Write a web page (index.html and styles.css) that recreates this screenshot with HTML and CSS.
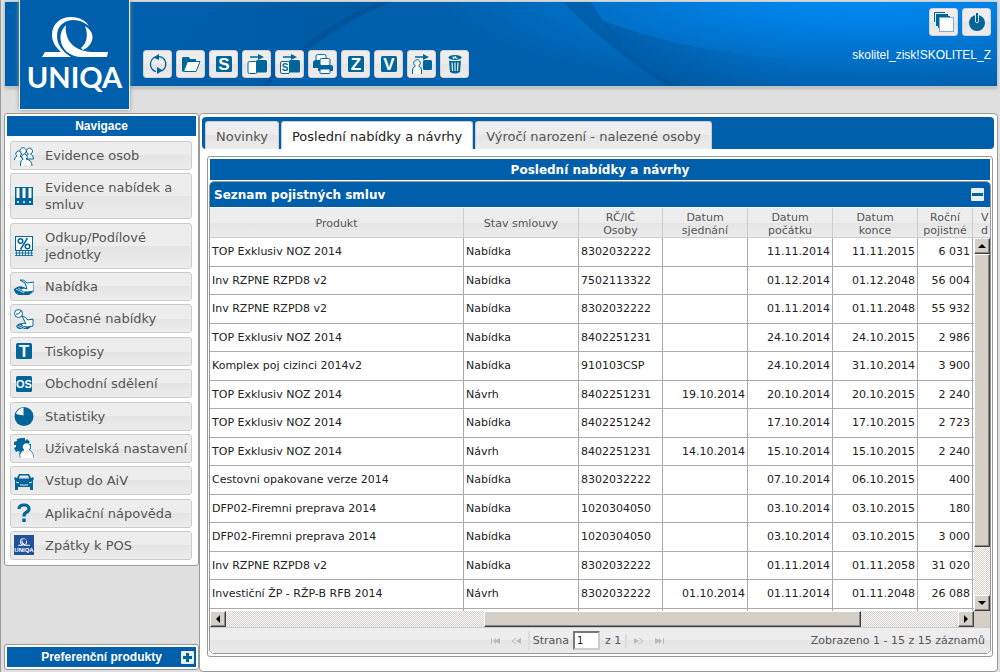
FILE: index.html
```html
<!DOCTYPE html>
<html lang="cs">
<head>
<meta charset="utf-8">
<title>UNIQA</title>
<link rel="stylesheet" href="styles.css">
</head>
<body>
<svg class="defs" aria-hidden="true">
  <defs>
    <symbol id="logo-ring" viewBox="0 0 66 42">
      <path d="M3 36h16C13 31 10 25 10 19 10 8 18 1 29 1c9 0 15 4 18 9-5-4-10-6-15-6C22 4 15 10 15 20c0 9 6 16 14 21H0z"/>
      <path d="M24 9C16 16 17 29 25 36c4 3 9 5 15 5h25l1-5H50C40 36 30 31 26 23c-2-5-3-10-2-14z"/>
      <path d="M43 10c5 3 7.500 7 7.500 11 0 6-4.500 11-9.500 13l-2-2c5-4 8-12 4-22z"/>
    </symbol>
    <symbol id="i-refresh" viewBox="0 0 20 20"><path d="M6 3.500A8 8 0 0 0 4 15M16 5a8 8 0 0 1-2 12M8 17.600A8 8 0 0 1 4 15M10 2.500A8 8 0 0 1 16 5" fill="none" stroke="currentColor" stroke-width="1.300"/><path d="M5 3.500 11 0v6zM15 16.500 9 13v7z"/></symbol>
    <symbol id="i-folder" viewBox="0 0 20 20"><path d="M1 17V4l1-1h6l1 2h6v3H7L2 18z"/><path d="M6.500 7.500H19L15 17.500H2.500z" fill="#fff" stroke="currentColor" stroke-width="1"/></symbol>
    <symbol id="i-s" viewBox="0 0 20 20"><rect x="2" y="2" width="16" height="16" rx="1.500"/><text x="10" y="16" class="glyph">S</text></symbol>
    <symbol id="i-z" viewBox="0 0 20 20"><rect x="2" y="2" width="16" height="16" rx="1.500"/><text x="10" y="16" class="glyph">Z</text></symbol>
    <symbol id="i-v" viewBox="0 0 20 20"><rect x="2" y="2" width="16" height="16" rx="1.500"/><text x="10" y="16" class="glyph">V</text></symbol>
    <symbol id="i-t" viewBox="0 0 20 20"><rect x="2" y="2" width="16" height="16" rx="1.500"/><text x="10" y="16" class="glyph">T</text></symbol>
    <symbol id="i-os" viewBox="0 0 20 20"><rect x="2" y="2" width="16" height="16" rx="1.500"/><text x="10" y="14" class="glyph glyph-os">OS</text></symbol>
    <symbol id="i-move" viewBox="0 0 20 20"><path d="M3 2.300h8V0l6 3-6 3V3.700H3z"/><rect x="1" y="7.500" width="9" height="12" rx="1.500" fill="#fff" stroke="currentColor"/><rect x="9" y="6" width="11" height="12.500" rx="1.500"/></symbol>
    <symbol id="i-move-s" viewBox="0 0 20 20"><path d="M3 2.300h8V0l6 3-6 3V3.700H3z"/><rect x=".5" y="7.500" width="9" height="12" rx="1.500" fill="#fff" stroke="currentColor"/><rect x="9" y="6" width="11" height="12.500" rx="1.500"/><text x="5" y="17" class="glyph glyph-sub">S</text></symbol>
    <symbol id="i-print" viewBox="0 0 20 20"><rect x="3" y=".6" width="10" height="6" rx="1.500" fill="#fff" stroke="currentColor"/><path d="M0 9q0-3 3-3h9v8H0z"/><rect x="7" y="4.500" width="10" height="7" rx="1.500" fill="#fff" stroke="currentColor"/><path d="M5 13q0-2 2-2h11q2 0 2 2v4H5z"/><rect x="7" y="15" width="10" height="4.500" rx="1" fill="#fff" stroke="currentColor"/></symbol>
    <symbol id="i-person-move" viewBox="0 0 20 20"><path d="M3 2.300h8V0l6 3-6 3V3.700H3z"/><rect x="11" y="6" width="9" height="10" rx="1.500"/><path d="M.5 20v-4q0-3 3-4a3.300 3.300 0 1 1 3 0q3 1 3 4v4" fill="#fff" stroke="currentColor"/></symbol>
    <symbol id="i-trash" viewBox="0 0 20 20"><path d="M4 6h12l-1 12q-5 3-10 0z"/><ellipse cx="10" cy="3.500" rx="6.500" ry="2.500"/><path d="M4.500 6.500h11M7 8.500 7.500 17M10 8.500V17M13 8.500 12.500 17M7.500 3l5 1.500M8 4.500l3-2" stroke="#fff" stroke-width="1.100" fill="none"/></symbol>
    <symbol id="i-windows" viewBox="0 0 20 20"><path d="M.5 10V.5H11" fill="none" stroke="currentColor" stroke-width="1"/><path d="M2 14V2h12v2H4v10zM4 16V4h12v2H6v10z"/><rect x="5.500" y="5.500" width="14" height="14" fill="#fff" stroke="#7faec8"/></symbol>
    <symbol id="i-power" viewBox="0 0 20 20"><circle cx="10" cy="11" r="8"/><path d="M8.500 1v9q1.500 2 3 0V1" fill="currentColor" stroke="#e4eef3" stroke-width="1"/></symbol>
    <symbol id="i-people" viewBox="0 0 20 20"><g fill="#fff" stroke="currentColor" stroke-width="1"><path d="M4 13q1-4 4-5a3.200 3.200 0 1 1 2 0q3 1 3 5zM11 13q1-4 3.500-5a3 3 0 1 1 2 0q3 1 3 5z"/><path d="M.5 14q0-3 2.500-4a2.700 2.700 0 1 1 3 0q2 1 3 4M6.500 20v-2q0-4 2.500-5a2.700 2.700 0 1 1 3 0q6 1 6 7"/></g></symbol>
    <symbol id="i-binders" viewBox="0 0 20 20"><path d="M1 1h18v18H1z"/><path d="M2.500 2h3v10h-3zM8.500 2h3v10h-3zM14.500 2h3v10h-3z" fill="#fff"/><path d="M3 16h2M9 16h2M15 16h2" stroke="#fff" stroke-width="1.500"/></symbol>
    <symbol id="i-percent" viewBox="0 0 20 20"><rect x="1.500" y=".5" width="17" height="14" fill="#fff" stroke="currentColor"/><g fill="none" stroke="currentColor" stroke-width="1.500"><circle cx="6.500" cy="5" r="2.300"/><circle cx="13.500" cy="10.500" r="2.300"/><path d="M13.500 2 6.500 13.500"/></g><path d="M1 17h18M1 19.500h18M2.500 14v6M5.500 14v6M8.500 14v6M11.500 14v6M14.500 14v6M17.500 14v6" stroke="currentColor" stroke-width=".8"/></symbol>
    <symbol id="i-hand" viewBox="0 0 20 20"><path d="M0 12q5-4 9-2l10 5-4 3H5q-4-1-5-5z"/><path d="M6 3q4-1 7 3l7-1v9l-7 1q-5 0-6-3l3-1 3 1-2-6z" fill="#fff" stroke="currentColor"/><path d="M2 12l8 4M4 11l7 4" stroke="#fff" stroke-width=".7"/></symbol>
    <symbol id="i-hand-clock" viewBox="0 0 20 20"><circle cx="4.500" cy="4.500" r="4" fill="#fff" stroke="currentColor"/><path d="M4.500 5 7 2M4.500 5H2" stroke="currentColor"/><path d="M2 17q3-4 7-2l9 2-4 3H6q-3 0-4-3z"/><path d="M8 7q4 1 6 4l5-1v7l-6 1q-4 0-6-3l3-1 2 1-2-4z" fill="#fff" stroke="currentColor"/><path d="M3 17l7 3M5 16l7 3" stroke="#fff" stroke-width=".7"/></symbol>
    <symbol id="i-pie" viewBox="0 0 20 20"><circle cx="10" cy="10.500" r="9.500"/><path d="M9.500 9.500V1.500Q3 3 2 8z" fill="#fff"/></symbol>
    <symbol id="i-gear-user" viewBox="0 0 20 20"><path d="M7 0h4v3l2-2 3 3-2 2h3v5l-3 1-6 6-3-2 1-2-2-1-2 1-2-4 2-1V7H0V4l3-1V1z"/><path d="M6 20v-4q1-3 4-4a4 4 0 1 1 5 0q4 1 5 8" fill="#fff" stroke="currentColor" stroke-width=".7"/></symbol>
    <symbol id="i-car" viewBox="0 0 20 20"><path d="M5 3h10l2 4 2-1 1 2-1 1v10h-3v-3H4v3H1V9L0 8l1-2 2 1z"/><path d="M6 4.500h8l1 3H5z" fill="#e9e9e9"/><path d="M2 11l3 1M18 11l-3 1M6 14h8" stroke="#e9e9e9"/></symbol>
    <symbol id="i-question" viewBox="0 0 20 20"><path d="M5 6q0-4 5-4t5 4q0 2-3 3.500-2 1-2 4" fill="none" stroke="currentColor" stroke-width="3.200"/><path d="M8.300 15.500h3.400V19H8.300z"/></symbol>
  </defs>
</svg>

<header class="top">
  <div class="banner">
    <svg class="banner-art" viewBox="0 0 992 84" preserveAspectRatio="none" aria-hidden="true">
      <defs>
        <radialGradient id="glow" gradientUnits="userSpaceOnUse" cx="0" cy="0" r="1" gradientTransform="translate(860 -8) scale(430 98)"><stop offset="0" stop-color="#008cf4"/><stop offset=".35" stop-color="#007fe2"/><stop offset="1" stop-color="#005fab"/></radialGradient>
        <linearGradient id="shade" x1="0" y1="0" x2="1" y2="0"><stop offset="0" stop-color="#00498a" stop-opacity="0"/><stop offset="1" stop-color="#00498a" stop-opacity=".28"/></linearGradient>
        <linearGradient id="fade" x1="0" y1="0" x2="1" y2="0"><stop offset="0" stop-color="#004f91" stop-opacity=".5"/><stop offset="1" stop-color="#004f91" stop-opacity="0"/></linearGradient>
      </defs>
      <rect width="992" height="84" fill="url(#glow)"/>
      <path d="M145 84Q175 30 225 0H386Q310 28 260 84z" fill="url(#shade)"/>
      <path d="M258 84Q305 28 374 0H386Q310 32 264 84z" fill="#004b8b" opacity=".45"/>
      <path d="M558 0H586Q614 50 674 84H662Q600 44 558 0z" fill="#004f91" opacity=".5"/>
      <path d="M596 18Q680 50 790 58V84H674Q622 52 596 18z" fill="url(#fade)"/>
    </svg>
    <div class="toolbar">
      <button class="tool" aria-label="Obnovit"><svg><use href="#i-refresh"/></svg></button>
      <button class="tool" aria-label="Otevřít"><svg><use href="#i-folder"/></svg></button>
      <button class="tool" aria-label="Smlouva"><svg><use href="#i-s"/></svg></button>
      <button class="tool" aria-label="Převod"><svg><use href="#i-move"/></svg></button>
      <button class="tool" aria-label="Převod smlouvy"><svg><use href="#i-move-s"/></svg></button>
      <button class="tool" aria-label="Tisk"><svg><use href="#i-print"/></svg></button>
      <button class="tool" aria-label="Záznam"><svg><use href="#i-z"/></svg></button>
      <button class="tool" aria-label="Výpis"><svg><use href="#i-v"/></svg></button>
      <button class="tool" aria-label="Převod osoby"><svg><use href="#i-person-move"/></svg></button>
      <button class="tool" aria-label="Smazat"><svg><use href="#i-trash"/></svg></button>
    </div>
    <div class="session">
      <div class="session-tools">
        <button class="tool" aria-label="Okna"><svg><use href="#i-windows"/></svg></button>
        <button class="tool" aria-label="Odhlásit"><svg><use href="#i-power"/></svg></button>
      </div>
      <span class="user">skolitel_zisk!SKOLITEL_Z</span>
    </div>
  </div>
  <a class="logo" href="#"><svg class="logo-mark" aria-hidden="true"><use href="#logo-ring"/></svg><span class="logo-name">UNIQA</span></a>
</header>

<div class="layout">
  <aside class="side">
    <nav class="panel">
      <h2 class="panel-title">Navigace</h2>
      <div class="menu">
        <a class="item" href="#"><svg><use href="#i-people"/></svg><span>Evidence osob</span></a>
        <a class="item" href="#"><svg><use href="#i-binders"/></svg><span>Evidence nabídek a smluv</span></a>
        <a class="item" href="#"><svg><use href="#i-percent"/></svg><span>Odkup/Podílové jednotky</span></a>
        <a class="item" href="#"><svg><use href="#i-hand"/></svg><span>Nabídka</span></a>
        <a class="item" href="#"><svg><use href="#i-hand-clock"/></svg><span>Dočasné nabídky</span></a>
        <a class="item" href="#"><svg><use href="#i-t"/></svg><span>Tiskopisy</span></a>
        <a class="item" href="#"><svg><use href="#i-os"/></svg><span>Obchodní sdělení</span></a>
        <a class="item" href="#"><svg><use href="#i-pie"/></svg><span>Statistiky</span></a>
        <a class="item" href="#"><svg><use href="#i-gear-user"/></svg><span>Uživatelská nastavení</span></a>
        <a class="item" href="#"><svg><use href="#i-car"/></svg><span>Vstup do AiV</span></a>
        <a class="item" href="#"><svg><use href="#i-question"/></svg><span>Aplikační nápověda</span></a>
        <a class="item" href="#"><svg viewBox="0 0 20 20"><rect width="20" height="20" fill="#20529c"/><use href="#logo-ring" x="4" y="3" width="12" height="8" fill="#fff"/><text x="10" y="17" class="glyph glyph-tiny">UNIQA</text></svg><span>Zpátky k POS</span></a>
      </div>
    </nav>
    <section class="panel products">
      <h2 class="panel-title">Preferenční produkty</h2>
      <button class="toggle plus" aria-label="Rozbalit"></button>
    </section>
  </aside>

  <main class="content">
    <div class="tabs" role="tablist">
      <button class="tab" role="tab">Novinky</button>
      <button class="tab active" role="tab" aria-selected="true">Poslední nabídky a návrhy</button>
      <button class="tab" role="tab">Výročí narození - nalezené osoby</button>
    </div>
    <section class="box">
      <h1 class="box-title">Poslední nabídky a návrhy</h1>
      <div class="grid">
        <div class="grid-title"><h2>Seznam pojistných smluv</h2><button class="toggle" aria-label="Sbalit"></button></div>
        <div class="grid-view">
          <table>
            <colgroup><col><col class="c-state"><col class="c-id"><col class="c-date"><col class="c-date"><col class="c-date"><col class="c-sum"><col class="c-more"></colgroup>
            <thead><tr><th>Produkt</th><th>Stav smlouvy</th><th>RČ/IČ<br>Osoby</th><th>Datum<br>sjednání</th><th>Datum<br>počátku</th><th>Datum<br>konce</th><th>Roční<br>pojistné</th><th>V<br>d</th></tr></thead>
            <tbody>
              <tr><td>TOP Exklusiv NOZ 2014</td><td>Nabídka</td><td>8302032222</td><td></td><td>11.11.2014</td><td>11.11.2015</td><td>6 031</td><td></td></tr>
              <tr><td>Inv RZPNE RZPD8 v2</td><td>Nabídka</td><td>7502113322</td><td></td><td>01.12.2014</td><td>01.12.2048</td><td>56 004</td><td></td></tr>
              <tr><td>Inv RZPNE RZPD8 v2</td><td>Nabídka</td><td>8302032222</td><td></td><td>01.11.2014</td><td>01.11.2048</td><td>55 932</td><td></td></tr>
              <tr><td>TOP Exklusiv NOZ 2014</td><td>Nabídka</td><td>8402251231</td><td></td><td>24.10.2014</td><td>24.10.2015</td><td>2 986</td><td></td></tr>
              <tr><td>Komplex poj cizinci 2014v2</td><td>Nabídka</td><td>910103CSP</td><td></td><td>24.10.2014</td><td>31.10.2014</td><td>3 900</td><td></td></tr>
              <tr><td>TOP Exklusiv NOZ 2014</td><td>Návrh</td><td>8402251231</td><td>19.10.2014</td><td>20.10.2014</td><td>20.10.2015</td><td>2 240</td><td></td></tr>
              <tr><td>TOP Exklusiv NOZ 2014</td><td>Nabídka</td><td>8402251242</td><td></td><td>17.10.2014</td><td>17.10.2015</td><td>2 723</td><td></td></tr>
              <tr><td>TOP Exklusiv NOZ 2014</td><td>Návrh</td><td>8402251231</td><td>14.10.2014</td><td>15.10.2014</td><td>15.10.2015</td><td>2 240</td><td></td></tr>
              <tr><td>Cestovni opakovane verze 2014</td><td>Nabídka</td><td>8302032222</td><td></td><td>07.10.2014</td><td>06.10.2015</td><td>400</td><td></td></tr>
              <tr><td>DFP02-Firemni preprava 2014</td><td>Nabídka</td><td>1020304050</td><td></td><td>03.10.2014</td><td>03.10.2015</td><td>180</td><td></td></tr>
              <tr><td>DFP02-Firemni preprava 2014</td><td>Nabídka</td><td>1020304050</td><td></td><td>03.10.2014</td><td>03.10.2015</td><td>3 000</td><td></td></tr>
              <tr><td>Inv RZPNE RZPD8 v2</td><td>Nabídka</td><td>8302032222</td><td></td><td>01.11.2014</td><td>01.11.2058</td><td>31 020</td><td></td></tr>
              <tr><td>Investiční ŽP - RŽP-B RFB 2014</td><td>Návrh</td><td>8302032222</td><td>01.10.2014</td><td>01.11.2014</td><td>01.11.2048</td><td>26 088</td><td></td></tr>
              <tr><td></td><td></td><td></td><td></td><td></td><td></td><td></td><td></td></tr>
            </tbody>
          </table>
          <div class="scroll scroll-y">
            <button class="arrow" aria-label="Nahoru"><svg viewBox="0 0 8 8"><path d="M0 6h8L4 2z"/></svg></button>
            <div class="thumb"></div><div class="track"></div>
            <button class="arrow" aria-label="Dolů"><svg viewBox="0 0 8 8"><path d="M0 2h8L4 6z"/></svg></button>
          </div>
        </div>
        <div class="scroll scroll-x">
          <button class="arrow" aria-label="Vlevo"><svg viewBox="0 0 8 8"><path d="M6 0v8L2 4z"/></svg></button>
          <div class="track before"></div><div class="thumb"></div><div class="track after"></div>
          <button class="arrow" aria-label="Vpravo"><svg viewBox="0 0 8 8"><path d="M2 0v8l4-4z"/></svg></button>
          <div class="corner"></div>
        </div>
        <div class="pager">
          <div class="pages">
            <button class="step" aria-label="První"><svg viewBox="0 0 10 8"><path d="M0 1h1v6H0zM2 4l3-3v6zM5 3l4-2v6L5 5z"/></svg></button>
            <button class="step" aria-label="Předchozí"><svg viewBox="0 0 10 8"><path d="M5 1 1 4l4 3" fill="none" stroke="currentColor"/><path d="M5 4l5-3v6z"/></svg></button>
            <label class="page"><span>Strana</span><input type="text" value="1"></label><span class="total">z 1</span>
            <button class="step" aria-label="Další"><svg viewBox="0 0 10 8"><path d="M5 1l4 3-4 3" fill="none" stroke="currentColor"/><path d="M5 4 0 1v6z"/></svg></button>
            <button class="step" aria-label="Poslední"><svg viewBox="0 0 10 8"><path d="M9 1h1v6H9zM8 4 5 1v6zM5 3 1 1v6l4-2z"/></svg></button>
          </div>
          <span class="count">Zobrazeno 1 - 15 z 15 záznamů</span>
        </div>
      </div>
    </section>
  </main>
</div>
</body>
</html>
```
FILE: styles.css
```css
* { box-sizing: border-box; }

:root {
  --blue: #005fab;
  --icon: #006699;
  --line: #999;
  --verdana: Verdana, "DejaVu Sans", sans-serif;
  --plate: linear-gradient(#ededed 50%, #e4e4e4 50%, #ececec);
}

body {
  margin: 0;
  height: 100vh;
  display: flex;
  flex-direction: column;
  background: #dfdfdf;
  border-left: 1px solid var(--line);
  font: 11px/14px var(--verdana);
  color: #222;
}

h1, h2 { margin: 0; }
button { padding: 0; font: inherit; }
svg { fill: currentColor; }
.defs { position: absolute; width: 0; height: 0; }

.glyph { fill: #fff; font: bold 17px "Liberation Sans", Arial, sans-serif; text-anchor: middle; }
.glyph-os { font-size: 11px; }
.glyph-sub { fill: #069; font-size: 10px; }
.glyph-tiny { font-size: 6px; }

/* Header */
.top { position: relative; flex: none; padding: 2px 3px 27px 4px; }
.banner {
  position: relative;
  display: flex;
  justify-content: space-between;
  align-items: flex-start;
  height: 84px;
  padding: 6px 6px 8px 138px;
  background: var(--blue);
  box-shadow: 0 0 2px 1px #b9c6d0, 0 3px 3px #bbb;
}
.banner-art { position: absolute; inset: 0; width: 100%; height: 100%; }
.toolbar, .session { position: relative; }
.toolbar { display: flex; gap: 4px; align-self: flex-end; }
.session { display: flex; flex-direction: column; align-items: flex-end; gap: 11px; }
.session-tools { display: flex; gap: 4px; }
.tool {
  display: grid;
  place-items: center;
  width: 29px;
  height: 28px;
  border: 1px solid #d3d3d3;
  border-radius: 3px;
  background: var(--plate);
  color: var(--icon);
}
.tool svg { width: 20px; height: 20px; }
.user { font: 12px/16px "Liberation Sans", Arial, sans-serif; color: #fff; }

.logo {
  position: absolute;
  left: 18px;
  top: 0;
  display: flex;
  flex-direction: column;
  align-items: center;
  width: 111px;
  height: 110px;
  padding-top: 16px;
  border: 1px solid #e8eef4;
  border-top: 0;
  background: var(--blue);
  box-shadow: 0 0 4px #999;
  color: #fff;
  text-decoration: none;
}
.logo-mark { width: 66px; height: 42px; }
.logo-name { font: bold 29px/37px Lato, sans-serif; }

/* Two-column body */
.layout { flex: 1; display: grid; grid-template-columns: 195px minmax(0, 1fr); min-height: 0; padding: 0 2px 0 3px; }
.side { display: flex; flex-direction: column; justify-content: space-between; padding-bottom: 2px; }
.panel { padding: 2px; background: #fff; border: 1px solid var(--line); border-radius: 3px; }
.panel-title {
  background: var(--blue);
  color: #fff;
  text-align: center;
  font: bold 12px/20px "Liberation Sans", Arial, sans-serif;
}
.menu { display: flex; flex-direction: column; justify-content: space-between; min-height: 427px; padding: 5px 4px 3px 3px; }
.item {
  display: flex;
  align-items: center;
  gap: 11px;
  padding: 5px 2px 5px 3px;
  border: 1px solid #ccc;
  border-radius: 3px;
  background: var(--plate);
  color: #555;
  font-size: 13px;
  line-height: 17px;
  text-decoration: none;
}
.item svg { flex: none; width: 20px; height: 20px; margin: -2px 0; color: var(--icon); }
.products { position: relative; }
.toggle {
  flex: none;
  width: 13px;
  height: 13px;
  border: 0;
  border-radius: 1px;
  background: linear-gradient(var(--icon), var(--icon)) center / 11px 3px no-repeat, #e8eef2;
}
.plus {
  position: absolute;
  right: 4px;
  top: 6px;
  background: linear-gradient(var(--icon), var(--icon)) center / 9px 3px no-repeat,
    linear-gradient(var(--icon), var(--icon)) center / 3px 9px no-repeat, #e8eef2;
}

/* Content */
.content { display: flex; flex-direction: column; min-height: 0; padding: 3px 3px 14px 2px; background: #fff; border: 1px solid var(--line); border-radius: 4px; }
.tabs { display: flex; gap: 2px; flex: none; height: 32px; padding: 4px 3px 0; background: var(--blue); border-radius: 4px; }
.tab {
  padding: 2px 10px 0;
  border: 1px solid #ccc;
  border-bottom: 0;
  border-radius: 3px 3px 0 0;
  background: var(--plate);
  color: #555;
  font-size: 13px;
}
.tab.active { background: #fff; color: #222; }
.box { flex: 1; display: flex; flex-direction: column; min-height: 0; margin: 7px 1px 0 5px; padding: 2px 1px; border: 1px solid var(--line); border-radius: 3px; }
.box-title { margin: 0 1px 1px; padding-top: 1px; background: var(--blue); color: #fff; text-align: center; font-size: 12px; line-height: 20px; }
.grid { flex: 1; display: flex; flex-direction: column; min-height: 0; border: 1px solid var(--line); border-radius: 5px; overflow: hidden; }
.grid-title { display: flex; justify-content: space-between; align-items: center; flex: none; height: 26px; padding: 0 6px 0 4px; background: var(--blue); border-bottom: 1px solid #fff; color: #fff; }
.grid-title h2 { font-size: 12px; }
.grid-view { position: relative; flex: 1; min-height: 0; overflow: hidden; }

table { width: 100%; border-collapse: separate; border-spacing: 0; table-layout: fixed; }
.c-state { width: 115px; }
.c-id { width: 84px; }
.c-date { width: 85px; }
.c-sum { width: 55px; }
.c-more { width: 17px; }
th, td { padding: 0 2px; border: 0 solid #aaa; border-width: 0 1px 1px 0; white-space: nowrap; overflow: hidden; }
th { height: 30px; padding: 2px 2px 0; background: var(--plate); border-color: #ccc; color: #555; font-weight: normal; line-height: 13px; font-size: 11px; }
th:last-child { padding-left: 8px; border-right: 0; text-align: left; }
td { height: 29px; }
tr:nth-child(even) td { height: 28px; }
td:nth-child(n+4) { text-align: right; }

/* Scroll bars */
.scroll { display: flex; background: #d4d0c8; }
.scroll-y { position: absolute; right: 0; top: 30px; bottom: 0; width: 16px; flex-direction: column; }
.scroll-x { flex: none; height: 16px; }
.arrow, .thumb { border: 1px solid; border-color: #fff #404040 #404040 #fff; background: #d4d0c8; box-shadow: inset -1px -1px #888; }
.arrow { display: grid; place-items: center; flex: none; width: 16px; height: 16px; color: #000; }
.arrow svg { width: 8px; height: 8px; }
.track { flex: 1; background: repeating-conic-gradient(#fff 0 25%, #d4d0c8 0 50%) 0 0 / 2px 2px; }
.scroll-y .thumb { flex: 294; }
.scroll-y .track { flex: 48; }
.scroll-x .before { flex: 259; }
.scroll-x .thumb { flex: 376; }
.scroll-x .after { flex: 97; }
.corner { flex: none; width: 16px; }

/* Pager */
.pager { display: grid; grid-template-columns: 6fr auto 7fr; align-items: center; flex: none; height: 26px; padding: 0 5px; background: var(--plate); border-top: 1px solid #ccc; color: #555; }
.pages { grid-column: 2; display: flex; align-items: center; font-size: 11px; }
.count { justify-self: end; }
.step { width: 10px; height: 8px; margin: 0 5px; border: 0; background: none; color: #bbb; line-height: 0; }
.step svg { width: 10px; height: 8px; }
.page { display: flex; align-items: center; gap: 4px; margin-left: 2px; padding-left: 3px; border-left: 2px solid #ddd; }
.page input { width: 27px; height: 19px; padding: 0 2px; border: 2px inset #ccc; background: #fff; font: inherit; font-size: 10px; color: #222; }
.total { margin-right: 2px; padding: 0 4px 0 5px; border-right: 2px solid #ddd; }
```
